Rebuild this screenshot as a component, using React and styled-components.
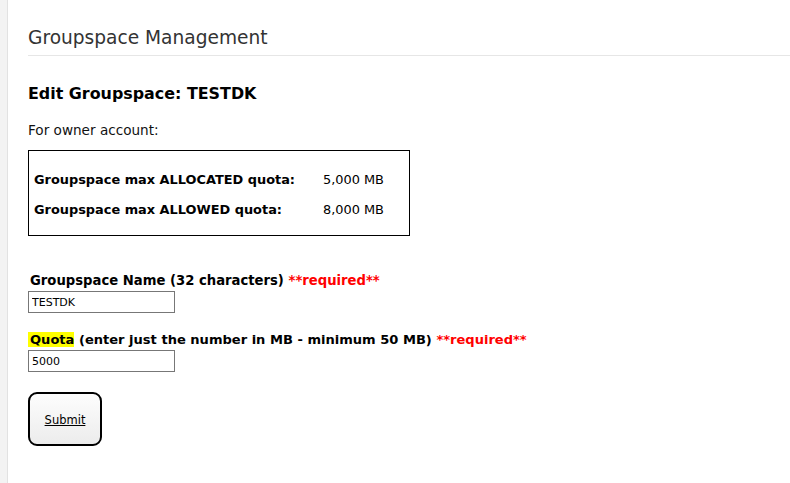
import React from "react";
import styled, { createGlobalStyle } from "styled-components";

const Global = createGlobalStyle`
  html, body { margin: 0; padding: 0; background: #fff; }
  body { font-family: "DejaVu Sans", Verdana, sans-serif; color: #000; }
`;

const Page = styled.div`
  display: flex;
  min-height: 483px;
`;

const SideStrip = styled.div`
  width: 7px;
  flex: none;
  background: #f3f3f3;
  border-right: 1px solid #e2e2e2;
`;

const Main = styled.main`
  flex: 1;
  padding-left: 20px;
`;

const Header = styled.h1`
  margin: 0;
  padding-top: 26px;
  padding-bottom: 5px;
  font-size: 18.6px;
  font-weight: normal;
  color: #333;
  border-bottom: 1px solid #e6e6e6;
  line-height: 24px;
`;

const Content = styled.div`
  padding-top: 28px;
`;

const Title = styled.h2`
  margin: 0;
  font-size: 15.9px;
  font-weight: bold;
  line-height: 20px;
`;

const Note = styled.p`
  margin: 18px 0 0;
  font-size: 13.6px;
  line-height: 16px;
  color: #111;
`;

const QuotaBox = styled.div`
  margin-top: 12px;
  width: 382px;
  height: 86px;
  border: 1px solid #000;
  box-sizing: border-box;
  padding: 21px 0 0 5px;
  display: grid;
  grid-template-columns: 289px auto;
  row-gap: 14px;
  align-content: start;
`;

const Label = styled.div`
  font-size: 12.9px;
  font-weight: bold;
  line-height: 16px;
`;

const Value = styled.div`
  font-size: 12.9px;
  line-height: 16px;
`;

const Form = styled.form`
  margin-top: 37px;
  display: flex;
  flex-direction: column;
  align-items: flex-start;
`;

const FieldLabel = styled.label`
  display: block;
  font-size: ${(p) => p.$size || 13.2}px;
  font-weight: bold;
  line-height: 16px;
  padding-left: 2px;
  margin-top: ${(p) => p.$top || 0}px;
`;

const Highlight = styled.span`
  background: #ffff00;
  margin-left: -2px;
  padding: 0 0 0 2px;
`;

const Required = styled.span`
  color: #ff0000;
`;

const Input = styled.input`
  display: block;
  width: 147px;
  height: 22px;
  box-sizing: border-box;
  border: 1px solid #777;
  margin-top: 2px;
  padding: 1px 3px 0;
  font-family: "DejaVu Sans", Verdana, sans-serif;
  font-size: 11px;
  color: #000;
  outline: none;
`;

const SubmitButton = styled.button`
  margin-top: 20px;
  width: 74px;
  height: 54px;
  border: 2px solid #000;
  border-radius: 9px;
  background: linear-gradient(#fdfdfd, #ececec);
  font-family: "DejaVu Sans", Verdana, sans-serif;
  font-size: 11.5px;
  color: #000;
  text-decoration: underline;
  padding: 2px 0 0;
  cursor: pointer;
`;

export default function App() {
  return (
    <>
      <Global />
      <Page>
        <SideStrip />
        <Main>
          <Header>Groupspace Management</Header>
          <Content>
            <Title>Edit Groupspace: TESTDK</Title>
            <Note>For owner account:</Note>
            <QuotaBox>
              <Label>Groupspace max ALLOCATED quota:</Label>
              <Value>5,000 MB</Value>
              <Label>Groupspace max ALLOWED quota:</Label>
              <Value>8,000 MB</Value>
            </QuotaBox>
            <Form onSubmit={(e) => e.preventDefault()}>
              <FieldLabel>
                Groupspace Name (32 characters) <Required>**required**</Required>
              </FieldLabel>
              <Input defaultValue="TESTDK" />
              <FieldLabel $top={19} $size={13.05}>
                <Highlight>Quota</Highlight> (enter just the number in MB - minimum 50 MB){" "}
                <Required>**required**</Required>
              </FieldLabel>
              <Input defaultValue="5000" />
              <SubmitButton type="submit">Submit</SubmitButton>
            </Form>
          </Content>
        </Main>
      </Page>
    </>
  );
}
